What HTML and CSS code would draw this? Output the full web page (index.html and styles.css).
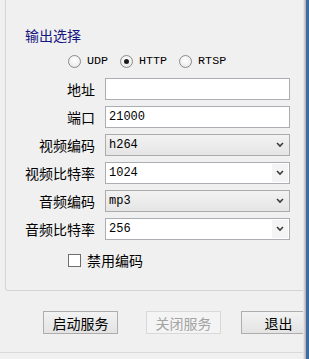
FILE: index.html
```html
<!DOCTYPE html>
<html lang="zh-CN">
<head>
    <meta charset="UTF-8">
    <title>输出选择</title>
    <link rel="stylesheet" href="styles.css">
</head>
<body>

    <div class="window">
        <div class="client">
            <div class="group">
                <div class="group-title">输出选择</div>

                <div class="radios">
                    <label class="radio"><span class="dot"></span>UDP</label>
                    <label class="radio on"><span class="dot"></span>HTTP</label>
                    <label class="radio"><span class="dot"></span>RTSP</label>
                </div>

                <div class="fields">
                    <label class="lbl">地址</label>
                    <div class="edit"></div>

                    <label class="lbl">端口</label>
                    <div class="edit">21000</div>

                    <label class="lbl">视频编码</label>
                    <div class="combo list">h264<span class="arrow"><svg width="8" height="6" viewBox="0 0 8 6"><polyline points="1,1 4,4 7,1" fill="none" stroke="#3c3c3c" stroke-width="1.6"/></svg></span></div>

                    <label class="lbl">视频比特率</label>
                    <div class="combo">1024<span class="arrow"><svg width="8" height="6" viewBox="0 0 8 6"><polyline points="1,1 4,4 7,1" fill="none" stroke="#3c3c3c" stroke-width="1.6"/></svg></span></div>

                    <label class="lbl">音频编码</label>
                    <div class="combo list">mp3<span class="arrow"><svg width="8" height="6" viewBox="0 0 8 6"><polyline points="1,1 4,4 7,1" fill="none" stroke="#3c3c3c" stroke-width="1.6"/></svg></span></div>

                    <label class="lbl">音频比特率</label>
                    <div class="combo">256<span class="arrow"><svg width="8" height="6" viewBox="0 0 8 6"><polyline points="1,1 4,4 7,1" fill="none" stroke="#3c3c3c" stroke-width="1.6"/></svg></span></div>
                </div>

                <label class="check"><span class="box"></span>禁用编码</label>
            </div>

            <div class="buttons">
                <button class="btn">启动服务</button>
                <button class="btn" disabled>关闭服务</button>
                <button class="btn btn-exit">退出</button>
            </div>

            <div class="sep"></div>
        </div>
        <div class="frame"></div>
    </div>

</body>
</html>
```

FILE: styles.css
```css
body {
    margin: 0;
    padding: 0;
    background-color: #f0f0f0;
    font-family: "Noto Sans CJK SC", "Liberation Sans", sans-serif;
    font-size: 14px;
    color: #000;
    overflow: hidden;
}
.window {
    display: flex;
    width: 309px;
    height: 359px;
}
.client {
    flex: 1;
    overflow: hidden;
}
.frame {
    width: 6px;
    background: linear-gradient(to right, #e4e4e4 0, #e4e4e4 1px, #cfcad0 1px, #cfcad0 2px, #b9b6c0 2px, #b9b6c0 3px, #3f6c9c 3px);
}

/* group box, its top edge is off the picture */
.group {
    margin-left: 5px;
    width: 320px;
    height: 291px;
    box-sizing: border-box;
    border: 1px solid #d5d5d5;
    border-top: none;
    border-radius: 0 0 0 3px;
    padding-top: 27px;
    padding-left: 14px;
}
.group-title {
    height: 16px;
    line-height: 16px;
    margin-left: 5px;
    color: #15157e;
    font-size: 14px;
}

.radios {
    display: flex;
    align-items: center;
    margin-top: 10px;
    margin-left: 48px;
    height: 16px;
    gap: 12px;
}
.radio, .check {
    display: flex;
    align-items: center;
    font-family: "Liberation Mono", monospace;
    font-size: 11.7px;
}
.dot {
    width: 11px;
    height: 11px;
    border: 1px solid #8a8a8a;
    border-radius: 50%;
    background: radial-gradient(circle at 50% 40%, #ffffff 0, #f2f2f2 50%, #dcdcdc 100%);
    margin-right: 6px;
    position: relative;
}
.radio.on .dot::after {
    content: "";
    position: absolute;
    left: 3px;
    top: 3px;
    width: 5px;
    height: 5px;
    border-radius: 50%;
    background: #1a1a1a;
}

.fields {
    display: grid;
    grid-template-columns: 75px 185px;
    column-gap: 10px;
    row-gap: 6px;
    margin-top: 9px;
}
.lbl {
    text-align: right;
    line-height: 22px;
    height: 22px;
}
.edit, .combo {
    height: 22px;
    box-sizing: border-box;
    border: 1px solid #abadb3;
    background: #fff;
    font-family: "Liberation Mono", monospace;
    font-size: 12px;
    line-height: 20px;
    padding-left: 3px;
    position: relative;
}
.combo.list {
    border-color: #acacac;
    background: linear-gradient(#f2f2f2, #e5e5e5);
}
.arrow {
    position: absolute;
    right: 1px;
    top: 1px;
    width: 16px;
    height: 18px;
    display: flex;
    align-items: center;
    justify-content: center;
}
.combo .arrow {
    background: #f4f4f4;
}
.combo.list .arrow {
    background: transparent;
}

.check {
    margin-top: 12px;
    margin-left: 48px;
    height: 16px;
    font-family: "Noto Sans CJK SC", sans-serif;
    font-size: 14px;
}
.box {
    width: 11px;
    height: 11px;
    border: 1px solid #6e6e6e;
    background: #fff;
    margin-right: 6px;
}

.buttons {
    display: flex;
    margin-top: 20px;
    padding-left: 43px;
    gap: 28px;
}
.btn {
    width: 75px;
    height: 23px;
    flex: none;
    padding: 0;
    border: 1px solid #adadad;
    background: linear-gradient(#f2f2f2, #e3e3e3);
    font-family: "Noto Sans CJK SC", sans-serif;
    font-size: 14px;
    line-height: 20px;
    color: #000;
}
.btn:disabled {
    border-color: #d9d9d9;
    background: #f4f4f4;
    color: #a3a3a3;
}
.btn-exit {
    margin-left: -8px;
}

.sep {
    margin-top: 18px;
    height: 1px;
    background: #d9d9d9;
}
```
